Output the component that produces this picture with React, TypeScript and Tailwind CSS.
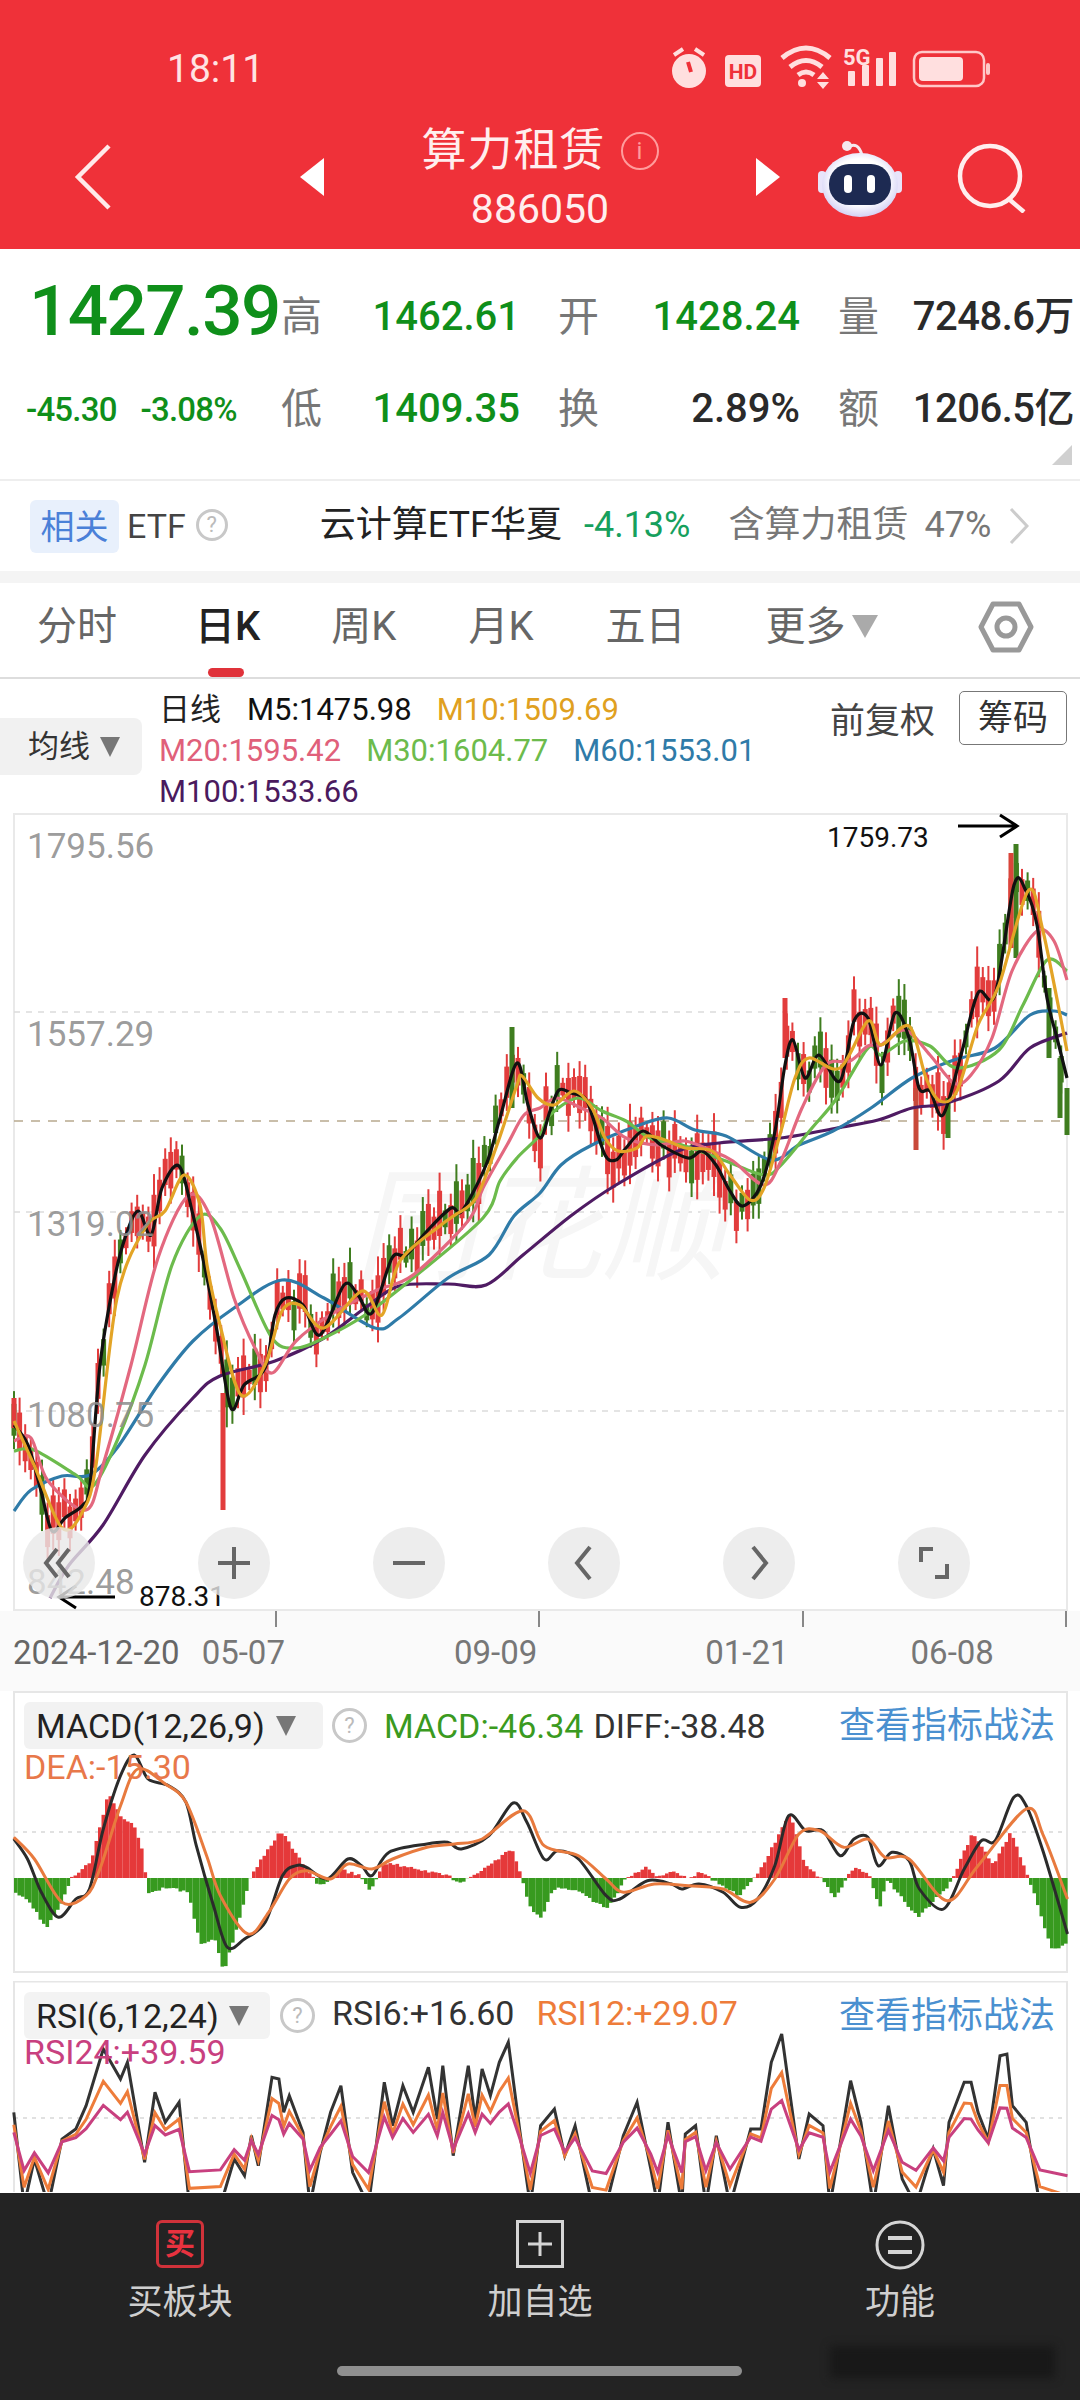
import React from "react";

type P = [number, number];

const smooth = (pts: P[]) => {
  let d = `M${pts[0][0]} ${pts[0][1]}`;
  for (let i = 0; i < pts.length - 1; i++) {
    const a = pts[Math.max(0, i - 1)], b = pts[i], c = pts[i + 1], e = pts[Math.min(pts.length - 1, i + 2)];
    const k = 0.16;
    d += `C${(b[0] + (c[0] - a[0]) * k).toFixed(1)} ${(b[1] + (c[1] - a[1]) * k).toFixed(1)} ${(c[0] - (e[0] - b[0]) * k).toFixed(1)} ${(c[1] - (e[1] - b[1]) * k).toFixed(1)} ${c[0]} ${c[1]}`;
  }
  return d;
};
const interp = (pts: P[], x: number) => {
  if (x <= pts[0][0]) return pts[0][1];
  for (let i = 0; i < pts.length - 1; i++) {
    if (x <= pts[i + 1][0]) {
      const t = (x - pts[i][0]) / (pts[i + 1][0] - pts[i][0] || 1);
      return pts[i][1] + (pts[i + 1][1] - pts[i][1]) * t;
    }
  }
  return pts[pts.length - 1][1];
};
const rnd = (i: number) => Math.abs((Math.sin(i * 12.9898 + 4.1) * 43758.5453) % 1);

const m5: P[] = [[14,1427],[28,1447],[41,1493],[52,1533],[65,1520],[83,1507],[90,1487],[100,1367],[114,1283],[125,1240],[138,1213],[151,1237],[162,1190],[179,1168],[193,1217],[207,1280],[217,1333],[231,1410],[244,1387],[265,1370],[275,1317],[286,1300],[303,1307],[320,1337],[344,1287],[358,1297],[372,1315],[392,1260],[406,1257],[427,1233],[451,1210],[462,1213],[486,1167],[500,1120],[517,1065],[528,1107],[540,1140],[550,1113],[559,1092],[571,1095],[585,1100],[592,1117],[605,1157],[616,1162],[626,1150],[643,1133],[661,1147],[688,1160],[702,1153],[716,1167],[730,1193],[743,1208],[761,1187],[775,1133],[785,1067],[793,1042],[805,1080],[819,1057],[840,1083],[854,1023],[868,1020],[881,1067],[895,1015],[909,1040],[919,1090],[930,1093],[943,1117],[961,1057],[978,995],[995,997],[1014,887],[1026,893],[1037,927],[1047,1000],[1057,1040],[1067,1080]];
const m10: P[] = [[14,1423],[34,1467],[62,1530],[83,1513],[96,1467],[117,1300],[145,1230],[165,1213],[184,1177],[200,1207],[207,1267],[220,1327],[241,1397],[265,1367],[282,1313],[300,1307],[324,1330],[362,1293],[382,1317],[400,1263],[441,1227],[455,1217],[476,1200],[497,1147],[517,1087],[522,1078],[538,1100],[554,1107],[574,1093],[592,1110],[605,1140],[618,1153],[637,1150],[647,1138],[668,1143],[685,1150],[712,1153],[730,1177],[750,1202],[764,1190],[781,1133],[795,1080],[809,1060],[840,1070],[868,1023],[881,1047],[909,1028],[926,1080],[940,1103],[957,1093],[978,1027],[999,987],[1028,893],[1043,933],[1067,1053]];
const m20: P[] = [[14,1443],[31,1440],[48,1483],[86,1512],[103,1467],[131,1367],[158,1260],[188,1198],[210,1218],[234,1300],[255,1350],[272,1375],[296,1343],[330,1317],[375,1293],[413,1277],[468,1223],[483,1190],[507,1147],[524,1117],[540,1110],[557,1100],[581,1110],[602,1120],[626,1140],[657,1147],[685,1143],[712,1153],[733,1163],[764,1187],[781,1163],[802,1110],[826,1067],[850,1063],[868,1048],[881,1047],[905,1032],[930,1057],[954,1085],[971,1077],[992,1040],[1012,973],[1037,933],[1054,943],[1067,982]];
const m30: P[] = [[14,1453],[34,1452],[76,1477],[93,1488],[117,1443],[145,1367],[172,1267],[200,1218],[220,1230],[241,1273],[272,1340],[296,1350],[324,1340],[365,1317],[413,1280],[483,1220],[500,1183],[517,1160],[540,1137],[550,1117],[578,1100],[602,1113],[626,1123],[650,1140],[685,1148],[726,1163],[764,1177],[781,1167],[812,1130],[837,1100],[868,1050],[881,1057],[905,1043],[930,1048],[957,1070],[999,1052],[1023,1007],[1047,962],[1067,973]];
const m60: P[] = [[14,1513],[31,1492],[62,1478],[90,1477],[117,1450],[158,1387],[193,1343],[234,1310],[282,1282],[324,1300],[375,1330],[399,1320],[448,1280],[489,1257],[514,1218],[540,1195],[561,1167],[592,1147],[637,1128],[668,1120],[695,1132],[726,1138],[771,1162],[799,1147],[833,1133],[871,1110],[912,1080],[954,1062],[995,1050],[1030,1017],[1054,1013],[1067,1017]];
const m100: P[] = [[50,1600],[69,1567],[103,1527],[145,1457],[193,1400],[220,1378],[275,1363],[324,1340],[365,1310],[399,1288],[448,1286],[486,1287],[523,1257],[572,1217],[616,1187],[678,1153],[719,1145],[781,1140],[837,1130],[878,1122],[912,1110],[947,1105],[999,1083],[1030,1050],[1067,1035]];

const zm = (a: P[]): P[] => a.map(([x, y]) => [+(x / 1.452).toFixed(1), +(1680 + y / 3).toFixed(1)]);
const histRaw: P[] = [[20,640],[40,670],[65,745],[85,680],[100,600],[105,590],[130,550],[155,340],[175,420],[190,430],[205,520],[209,590],[212,640],[240,625],[270,640],[290,800],[310,780],[322,880],[340,760],[360,600],[370,565],[405,455],[430,530],[450,590],[460,620],[480,600],[490,570],[520,590],[535,635],[545,597],[555,550],[600,570],[650,590],[665,615],[680,597],[700,570],[740,510],[755,590],[760,640],[770,700],[785,715],[800,630],[830,630],[880,690],[905,600],[935,565],[955,595],[975,580],[995,597],[1015,580],[1030,600],[1070,650],[1090,600],[1100,580],[1145,400],[1165,550],[1185,590],[1195,610],[1210,660],[1225,600],[1240,565],[1260,590],[1275,685],[1285,600],[1330,715],[1375,620],[1380,600],[1410,460],[1440,560],[1465,460],[1490,590],[1500,650],[1525,815],[1550,790]];
const diff: P[] = [[20,480],[40,540],[60,640],[85,715],[110,660],[130,630],[150,450],[175,290],[195,228],[215,300],[245,320],[270,370],[285,500],[310,680],[330,805],[355,780],[385,730],[410,590],[430,560],[445,565],[475,600],[505,540],[525,560],[540,590],[565,520],[620,495],[650,490],[670,510],[710,470],[745,372],[765,430],[790,540],[810,515],[840,540],[880,650],[900,660],[940,605],[975,615],[990,630],[1015,615],[1050,640],[1075,685],[1100,660],[1125,560],[1145,410],[1170,455],[1195,455],[1220,530],[1240,480],[1260,475],[1275,560],[1295,520],[1320,545],[1335,630],[1370,690],[1400,570],[1425,485],[1445,485],[1472,355],[1490,380],[1515,520],[1550,765]];
const dea: P[] = [[20,475],[50,540],[90,670],[125,650],[145,570],[175,380],[200,270],[240,315],[270,370],[300,530],[320,650],[360,765],[390,700],[420,600],[445,575],[480,600],[505,555],[540,570],[570,540],[620,505],[660,495],[700,480],[760,395],[790,500],[840,530],[880,600],[905,640],[950,615],[1000,620],[1050,630],[1090,670],[1125,600],[1160,465],[1190,455],[1225,505],[1260,480],[1285,535],[1320,540],[1375,665],[1420,560],[1490,390],[1515,470],[1550,660]];
const rsiRaw: P[] = [[20,400],[35,680],[50,540],[70,680],[90,480],[110,450],[125,380],[150,210],[175,300],[185,250],[210,550],[225,340],[240,430],[260,370],[275,680],[320,680],[340,540],[355,590],[365,470],[375,560],[395,295],[405,300],[412,400],[420,350],[440,460],[450,680],[465,520],[480,400],[495,320],[512,580],[535,680],[558,310],[570,440],[585,320],[600,400],[622,265],[635,420],[643,260],[658,530],[680,260],[690,420],[700,270],[712,350],[725,250],[738,190],[755,460],[770,680],[785,440],[805,390],[820,530],[835,440],[860,680],[880,680],[905,470],[925,370],[945,570],[955,680],[970,430],[990,680],[995,465],[1010,440],[1025,680],[1040,470],[1060,680],[1090,450],[1105,450],[1120,250],[1135,165],[1160,540],[1175,405],[1195,440],[1205,680],[1235,305],[1250,430],[1268,680],[1290,380],[1310,600],[1330,680],[1355,510],[1370,620],[1378,430],[1400,310],[1410,310],[1420,400],[1435,480],[1452,230],[1462,225],[1470,380],[1490,430],[1510,680],[1550,720]];

const rsiPts = (a: number, m: number): P[] => {
  const out: P[] = [];
  rsiRaw.forEach(([x, y], i) => {
    const jitter = (rnd(i + 30) - 0.5) * 14;
    out.push([+(x / 1.452).toFixed(1), +(1980 + (m + (y - 450) * a + (a < 1 ? jitter : 0)) / 3).toFixed(1)]);
  });
  return out;
};

const candles = () => {
  const els: React.ReactNode[] = [];
  let i = 0;
  for (let x = 14; x < 1066; x += 5.6) {
    const y = interp(m5, x);
    const up = 8 + rnd(i) * 42;
    const dn = 8 + rnd(i + 100) * 38;
    const hi = y - up, lo = y + dn;
    const red = x > 1040 ? false : rnd(i + 200) > 0.3;
    const col = red ? "#e23c3c" : "#3f7d1f";
    els.push(<rect key={"w" + i} x={x - 1} y={hi} width={2} height={lo - hi} fill={col} />);
    els.push(<rect key={"b" + i} x={x - 2.5} y={hi + (lo - hi) * 0.22} width={5} height={(lo - hi) * 0.55} fill={col} />);
    i++;
  }
  const extra: [number, number, number, string][] = [
    [223, 1395, 1512, "#e23c3c"], [1016, 846, 960, "#3f7d1f"], [1011, 855, 950, "#d9453a"], [1067, 1090, 1137, "#3f7d1f"],
    [916, 1090, 1152, "#c9493a"], [512, 1029, 1110, "#3f7d1f"], [785, 1000, 1060, "#e23c3c"], [14, 1400, 1430, "#e23c3c"],
    [948, 1100, 1140, "#3f7d1f"], [1049, 990, 1060, "#3f7d1f"], [1060, 1060, 1120, "#3f7d1f"],
  ];
  extra.forEach(([x, a, b, c], k) => els.push(<rect key={"e" + k} x={x - 2.5} y={a} width={5} height={b - a} fill={c} />));
  return els;
};

const histBars = () => {
  const pts = zm(histRaw);
  const els: React.ReactNode[] = [];
  let i = 0;
  for (let x = 14; x < 1067; x += 3.5) {
    const y = interp(pts, x) + (rnd(i) - 0.5) * 3;
    const top = Math.min(y, 1879), h = Math.abs(y - 1879);
    els.push(<rect key={i} x={x} y={top} width={3.6} height={h} fill={y < 1879 ? "#e5393a" : "#379a1f"} />);
    i++;
  }
  return els;
};

const Tri = ({ cls = "" }: { cls?: string }) => (
  <svg width="20" height="22" viewBox="0 0 20 22" className={cls}><path d="M0 1H20L10 21Z" fill="#777" /></svg>
);
const Q = ({ size = 35 }: { size?: number }) => (
  <span style={{ width: size, height: size }} className="flex items-center justify-center rounded-full border-[3px] border-[#c8c8c8] text-[22px] leading-none text-[#bbb]">?</span>
);
const LINK = () => <span className="ml-auto mr-[25px] text-[36px] leading-none text-[#4a90d0]">查看指标战法</span>;

const PriceLabel = ({ t, cls }: { t: string; cls: string }) => (
  <span className={`absolute left-[27px] text-[35px] leading-none text-[#8f8f8f]/90 ${cls}`}>{t}</span>
);

const Ctrl = ({ children }: { children: React.ReactNode }) => (
  <div className="flex h-[72px] w-[72px] items-center justify-center rounded-full bg-[#e8e8e8]/80">
    <svg width="44" height="44" viewBox="0 0 44 44" fill="none" stroke="#666" strokeWidth="4">{children}</svg>
  </div>
);

export default function App() {
  return (
    <div className="relative flex h-[2400px] w-[1080px] flex-col overflow-hidden bg-white font-[Roboto,'Noto_Sans_CJK_SC',sans-serif]">
      {/* header */}
      <div className="h-[249px] shrink-0 bg-[#ef3139] text-white">
        <div className="flex h-[105px] items-center pt-[34px]">
          <span className="ml-[167px] text-[39px] leading-none text-[#ffe3e3]">18:11</span>
          <svg className="ml-[405px]" width="330" height="50" viewBox="672 45 330 50" fill="#ffdfdf">
            <circle cx="692" cy="71" r="17" />
            <path d="M677 55l9-6M707 55l-9-6" stroke="#ffdfdf" strokeWidth="4" />
            <path d="M691 62l3 10" stroke="#ef3139" strokeWidth="4" />
            <rect x="728" y="55" width="36" height="32" rx="4" />
            <text x="746" y="79" textAnchor="middle" fontSize="21" fontWeight="700" fill="#ef3139" fontFamily="Roboto">HD</text>
            <path d="M785 58q24-20 48 0M793 67q16-13 32 0M801 75q8-6 16 0" fill="none" stroke="#ffdfdf" strokeWidth="5" />
            <circle cx="805" cy="83" r="4" />
            <path d="M826 75l6 7h-12zM826 92l-6-7h12z" transform="translate(0 -3)" />
            <text x="846" y="65" fontSize="22" fontWeight="700" fontFamily="Roboto">5G</text>
            <rect x="851" y="71" width="7" height="15" rx="1" />
            <rect x="865" y="65" width="7" height="21" rx="1" />
            <rect x="879" y="58" width="7" height="28" rx="1" />
            <rect x="892" y="52" width="7" height="34" rx="1" />
            <rect x="917" y="52" width="70" height="34" rx="8" fill="none" stroke="#ffc8c8" strokeWidth="2.5" />
            <rect x="922" y="57" width="44" height="24" rx="4" />
            <rect x="989" y="63" width="4" height="12" rx="2" fill="#ffc8c8" />
          </svg>
        </div>
        <div className="flex h-[144px] items-center">
          <svg className="ml-[74px] shrink-0" width="38" height="66" viewBox="0 0 38 66" fill="none" stroke="#ffeaea" strokeWidth="4.5"><path d="M35 2L4 33l31 31" /></svg>
          <svg className="ml-[188px] shrink-0" width="24" height="38" viewBox="0 0 24 38" fill="#fff"><path d="M24 0V38L0 19Z" /></svg>
          <div className="flex w-[432px] flex-col items-center">
            <div className="flex items-center">
              <span className="text-[45px] leading-[56px] tracking-[1px] text-[#ffeeee]">算力租赁</span>
              <span className="ml-[15px] flex h-[38px] w-[38px] items-center justify-center rounded-full border-2 border-[#ff9c9c] text-[24px] leading-none text-[#ff9c9c]">i</span>
            </div>
            <span className="mt-[8px] text-[41px] leading-[44px] text-[#ffeeee]">886050</span>
          </div>
          <svg className="shrink-0" width="24" height="38" viewBox="0 0 24 38" fill="#fff"><path d="M0 0V38L24 19Z" /></svg>
          <svg className="ml-[38px] mt-[4px] shrink-0" width="84" height="80" viewBox="0 0 84 80">
            <defs>
              <radialGradient id="hd" cx="50%" cy="45%" r="60%"><stop offset="60%" stopColor="#ffffff" /><stop offset="100%" stopColor="#c9c5f2" /></radialGradient>
            </defs>
            <path d="M30 8q10-6 14 8" fill="none" stroke="#f5e9ef" strokeWidth="3" />
            <circle cx="29" cy="7" r="5" fill="#f5e9ef" />
            <rect x="0" y="32" width="8" height="22" rx="4" fill="#e8e4fa" />
            <rect x="76" y="32" width="8" height="22" rx="4" fill="#e8e4fa" />
            <ellipse cx="42" cy="46" rx="38" ry="32" fill="url(#hd)" />
            <rect x="11" y="25" width="62" height="41" rx="20" fill="#1d2a52" />
            <rect x="26" y="36" width="8" height="18" rx="4" fill="#fff" />
            <rect x="49" y="36" width="8" height="18" rx="4" fill="#fff" />
          </svg>
          <svg className="ml-[54px] mt-[2px] shrink-0" width="72" height="70" viewBox="0 0 72 70" fill="none" stroke="#ffeeee" strokeWidth="4.5"><circle cx="34" cy="33" r="30" /><path d="M54 57l14 12" /></svg>
        </div>
      </div>

      {/* quote */}
      <div className="relative grid h-[232px] shrink-0 grid-cols-[281px_239px_38px_242px_38px_239px] grid-rows-[92px_92px] border-b-2 border-[#eee] pt-[22px] text-[#111] [&_.lb]:text-[41px] [&_.lb]:leading-none [&_.lb]:text-[#777] [&_.vl]:flex [&_.vl]:items-center [&_.vl]:justify-between [&_.nm]:ml-auto [&_.nm]:text-[40px] [&_.nm]:leading-none">
        <div className="pl-[29px] pt-[4px] text-[71px] font-medium leading-none tracking-[-1.6px] text-[#0f8f1a]">1427.39</div>
        <div className="vl"><span className="lb">高</span><span className="nm font-medium text-[#0f8f1a]">1462.61</span></div>
        <div />
        <div className="vl"><span className="lb">开</span><span className="nm font-medium text-[#0f8f1a]">1428.24</span></div>
        <div />
        <div className="vl"><span className="lb">量</span><span className="nm whitespace-nowrap font-medium text-[#2a2a2a] tracking-[-0.5px] pr-[3px]">7248.6万</span></div>
        <div className="flex items-center gap-[24px] pl-[26px] text-[33px] font-medium leading-none tracking-[-0.8px] text-[#0f8f1a]"><span>-45.30</span><span>-3.08%</span></div>
        <div className="vl"><span className="lb">低</span><span className="nm font-medium text-[#0f8f1a]">1409.35</span></div>
        <div />
        <div className="vl"><span className="lb">换</span><span className="nm font-medium text-[#2a2a2a]">2.89%</span></div>
        <div />
        <div className="vl"><span className="lb">额</span><span className="nm whitespace-nowrap font-medium text-[#2a2a2a] tracking-[-0.5px] pr-[3px]">1206.5亿</span></div>
        <svg className="absolute right-[8px] top-[196px]" width="20" height="20" viewBox="0 0 20 20"><path d="M20 0V20H0Z" fill="#d0d0d0" /></svg>
      </div>

      {/* etf */}
      <div className="flex h-[90px] shrink-0 items-start pt-[19px]">
        <span className="ml-[30px] flex h-[53px] w-[89px] items-center justify-center rounded-[6px] bg-[#e8f0fc] text-[34px] leading-none text-[#4a80d8]">相关</span>
        <span className="ml-[8px] mt-[9px] text-[34px] leading-none text-[#444]">ETF</span>
        <span className="ml-[10px] mt-[9px]"><Q size={32} /></span>
        <span className="ml-[92px] mt-[7px] whitespace-nowrap text-[36px] leading-none text-[#222]">云计算ETF华夏</span>
        <span className="ml-[22px] mt-[7px] text-[36px] leading-none text-[#16a05d]">-4.13%</span>
        <span className="ml-[38px] mt-[7px] whitespace-nowrap text-[36px] leading-none text-[#777]">含算力租赁</span>
        <span className="ml-[16px] mt-[7px] text-[36px] leading-none text-[#777]">47%</span>
        <svg className="ml-[18px] mt-[8px]" width="20" height="36" viewBox="0 0 20 36" fill="none" stroke="#ccc" strokeWidth="3"><path d="M2 1l16 17L2 35" /></svg>
      </div>
      <div className="h-[12px] shrink-0 bg-[#f4f4f4]" />

      {/* tabs */}
      <div className="relative flex h-[96px] shrink-0 items-center border-b-2 border-[#ddd] pb-[6px] text-[40px] leading-none text-[#666]">
        <span className="ml-[37px]">分时</span>
        <span className="ml-[78px] font-medium text-[#222]">日K</span>
        <span className="ml-[71px]">周K</span>
        <span className="ml-[72px]">月K</span>
        <span className="ml-[72px]">五日</span>
        <span className="ml-[80px]">更多</span>
        <svg className="ml-[6px] mb-[2px]" width="26" height="26" viewBox="0 0 26 26"><path d="M0 2H26L13 25Z" fill="#aaa" /></svg>
        <svg className="ml-[100px]" width="56" height="52" viewBox="0 0 56 52" fill="none" stroke="#999" strokeWidth="5"><path d="M15 3H41L53 26 41 49H15L3 26Z" strokeLinejoin="round" /><circle cx="28" cy="26" r="9" /></svg>
        <span className="absolute bottom-0 left-[208px] h-[9px] w-[36px] rounded-full bg-[#e0323a]" />
      </div>

      {/* ma info */}
      <div className="flex h-[134px] shrink-0 text-[31px] leading-[41px]">
        <div className="mt-[39px] flex h-[57px] w-[142px] shrink-0 items-center rounded-r-[8px] bg-[#f1f1f1] pl-[28px] text-[#333]">
          <span>均线</span><Tri cls="ml-[10px]" />
        </div>
        <div className="flex w-[630px] shrink-0 flex-col whitespace-nowrap pl-[17px] pt-[10px]">
          <div className="flex"><span className="mr-[26px] text-[#222]">日线</span><span className="text-[#111]">M5:1475.98</span><span className="ml-[25px] text-[#e0a020]">M10:1509.69</span></div>
          <div className="flex"><span className="text-[#e0607a]">M20:1595.42</span><span className="ml-[25px] text-[#6cbb4c]">M30:1604.77</span><span className="ml-[25px] text-[#2f7ba8]">M60:1553.01</span></div>
          <div><span className="text-[#4a1a5e]">M100:1533.66</span></div>
        </div>
        <span className="ml-[58px] mt-[22px] text-[35px] text-[#444]">前复权</span>
        <span className="ml-[24px] mt-[12px] flex h-[54px] w-[108px] items-center justify-center rounded-[5px] border border-[#777] text-[35px] text-[#333]">筹码</span>
      </div>

      {/* main chart */}
      <div className="relative h-[798px] shrink-0">
        <svg className="block" width="1080" height="798" viewBox="0 815 1080 798">
          <rect x="14" y="816" width="1053" height="796" fill="#fff" stroke="#e9e9e9" strokeWidth="2" />
          <g stroke="#dcdcdc" strokeWidth="1.5" strokeDasharray="6 6">
            <path d="M14 1014H1066M14 1214H1066M14 1413H1066" />
          </g>
          <path d="M14 1123H1066" stroke="#b8a98f" strokeWidth="1.5" strokeDasharray="9 8" />
          <text x="540" y="1272" textAnchor="middle" fontSize="124" fontStyle="italic" fill="#f6f6f6" fontFamily="'Noto Sans CJK SC'">同花顺</text>
          {candles()}
          <g fill="none" strokeLinejoin="round" strokeWidth="3.2">
            <path d={smooth(m100)} stroke="#4f1b63" />
            <path d={smooth(m60)} stroke="#2f7ba8" />
            <path d={smooth(m30)} stroke="#6cbb4c" />
            <path d={smooth(m20)} stroke="#e3687f" />
            <path d={smooth(m5)} stroke="#111" />
            <path d={smooth(m10)} stroke="#e3a426" />
          </g>
          <path d="M958 828H1016M1000 817l17 11-17 11" fill="none" stroke="#000" strokeWidth="3" />
          <path d="M115 1599H60M76 1588l-17 11 17 11" fill="none" stroke="#000" strokeWidth="3" />
        </svg>
        <PriceLabel t="1795.56" cls="top-[16px]" />
        <PriceLabel t="1557.29" cls="top-[204px]" />
        <PriceLabel t="1319.02" cls="top-[394px]" />
        <PriceLabel t="1080.75" cls="top-[585px]" />
        <PriceLabel t="842.48" cls="top-[752px]" />
        <span className="absolute left-[827px] top-[5px] text-[28px] leading-[40px] text-[#111]">1759.73</span>
        <span className="absolute left-[139px] top-[764px] text-[28px] leading-[40px] text-[#111]">878.31</span>
        <div className="absolute left-[23px] top-[714px] flex w-[947px] justify-between">
          <Ctrl><path d="M20 8L9 22l11 14M32 8L21 22l11 14" /></Ctrl>
          <Ctrl><path d="M22 6V38M6 22H38" /></Ctrl>
          <Ctrl><path d="M6 22H38" /></Ctrl>
          <Ctrl><path d="M28 6L15 22l13 16" /></Ctrl>
          <Ctrl><path d="M16 6l13 16-13 16" /></Ctrl>
          <Ctrl><path d="M21 8H9V21M23 36H35V23" /></Ctrl>
        </div>
      </div>

      {/* date axis */}
      <div className="relative h-[80px] shrink-0 bg-[#fafafa] text-[33px] leading-none text-[#777]">
        <span className="absolute left-[275px] top-0 h-[16px] w-[2px] bg-[#888]" />
        <span className="absolute left-[538px] top-0 h-[16px] w-[2px] bg-[#888]" />
        <span className="absolute left-[802px] top-0 h-[16px] w-[2px] bg-[#888]" />
        <span className="absolute left-[1065px] top-0 h-[16px] w-[2px] bg-[#888]" />
        <div className="flex pt-[25px]">
          <span className="ml-[13px] text-[#666]">2024-12-20</span>
          <span className="ml-[22px]">05-07</span>
          <span className="ml-[169px]">09-09</span>
          <span className="ml-[168px]">01-21</span>
          <span className="ml-[122px]">06-08</span>
        </div>
      </div>

      {/* MACD */}
      <div className="relative h-[282px] shrink-0">
        <svg className="block" width="1080" height="282" viewBox="0 1692 1080 282">
          <rect x="14" y="1693" width="1053" height="280" fill="#fff" stroke="#e6e6e6" strokeWidth="2" />
          <path d="M14 1833H1066" stroke="#d8d8d8" strokeWidth="1.5" strokeDasharray="4 5" />
          {histBars()}
          <path d={smooth(zm(diff))} fill="none" stroke="#2b2b2b" strokeWidth="3" />
          <path d={smooth(zm(dea))} fill="none" stroke="#e87a3e" strokeWidth="3" />
        </svg>
        <div className="absolute inset-x-0 top-[11px] flex items-center text-[34px] leading-none">
          <div className="ml-[24px] flex h-[47px] w-[299px] items-center rounded-[6px] bg-[#f2f2f2] pl-[12px] text-[#222]">MACD(12,26,9)<Tri cls="ml-[11px]" /></div>
          <span className="ml-[9px]"><Q /></span>
          <span className="ml-[17px] text-[#3a9a20]">MACD:-46.34</span>
          <span className="ml-[10px] text-[#333]">DIFF:-38.48</span>
          <LINK />
        </div>
        <span className="absolute left-[24px] top-[58px] text-[34px] leading-[36px] text-[#e8784a]">DEA:-15.30</span>
      </div>

      <div className="h-[8px] shrink-0" />

      {/* RSI */}
      <div className="relative min-h-0 flex-1 overflow-hidden">
        <svg className="block" width="1080" height="211" viewBox="0 1982 1080 211">
          <path d="M14 1982H1066" stroke="#e6e6e6" strokeWidth="3" />
          <path d="M14 1982V2193M1067 1982V2193" stroke="#e6e6e6" strokeWidth="2" />
          <path d="M14 2119H1066" stroke="#d8d8d8" strokeWidth="1.5" strokeDasharray="4 5" />
          <polyline points={rsiPts(1, 450).map((p) => p.join(",")).join(" ")} fill="none" stroke="#333" strokeWidth="3" />
          <polyline points={rsiPts(0.68, 470).map((p) => p.join(",")).join(" ")} fill="none" stroke="#ee7c3a" strokeWidth="3" />
          <polyline points={rsiPts(0.42, 480).map((p) => p.join(",")).join(" ")} fill="none" stroke="#c8407f" strokeWidth="3" />
        </svg>
        <div className="absolute inset-x-0 top-[11px] flex items-center text-[34px] leading-none">
          <div className="ml-[24px] flex h-[47px] w-[246px] items-center rounded-[6px] bg-[#f2f2f2]/90 pl-[12px] text-[#222]">RSI(6,12,24)<Tri cls="ml-[10px]" /></div>
          <span className="ml-[10px]"><Q /></span>
          <span className="ml-[17px] -mt-[6px] text-[#333]">RSI6:+16.60</span>
          <span className="ml-[22px] -mt-[6px] text-[#ee7c3a]">RSI12:+29.07</span>
          <LINK />
        </div>
        <span className="absolute left-[24px] top-[53px] text-[34px] leading-[36px] text-[#c8407f]">RSI24:+39.59</span>
      </div>

      {/* bottom bar */}
      <div className="relative h-[207px] shrink-0 bg-[#232323] text-[35px] leading-none text-[#cfcfcf]">
        <div className="grid h-[140px] grid-cols-3">
          <div className="flex flex-col items-center pt-[27px]">
            <span className="flex h-[48px] w-[48px] items-center justify-center rounded-[6px] border-[3px] border-[#d0323a] text-[30px] font-bold leading-none text-[#e8323f]">买</span>
            <span className="mt-[17px]">买板块</span>
          </div>
          <div className="flex flex-col items-center pt-[27px]">
            <svg width="48" height="48" viewBox="0 0 48 48" fill="none" stroke="#d5d5d5" strokeWidth="3"><rect x="1.5" y="1.5" width="45" height="45" /><path d="M24 12V36M12 24H36" /></svg>
            <span className="mt-[17px]">加自选</span>
          </div>
          <div className="flex flex-col items-center pt-[27px]">
            <svg width="50" height="50" viewBox="0 0 50 50" fill="none" stroke="#d5d5d5" strokeWidth="3"><circle cx="25" cy="25" r="23" /><path d="M13 18H37M13 32H37" strokeWidth="4" /></svg>
            <span className="mt-[15px]">功能</span>
          </div>
        </div>
        <div className="absolute bottom-[24px] left-[337px] h-[10px] w-[405px] rounded-full bg-[#8f8f8f]" />
        <div className="absolute bottom-[22px] left-[830px] h-[32px] w-[225px] bg-[#101010]/60 blur-[5px]" />
      </div>
    </div>
  );
}
